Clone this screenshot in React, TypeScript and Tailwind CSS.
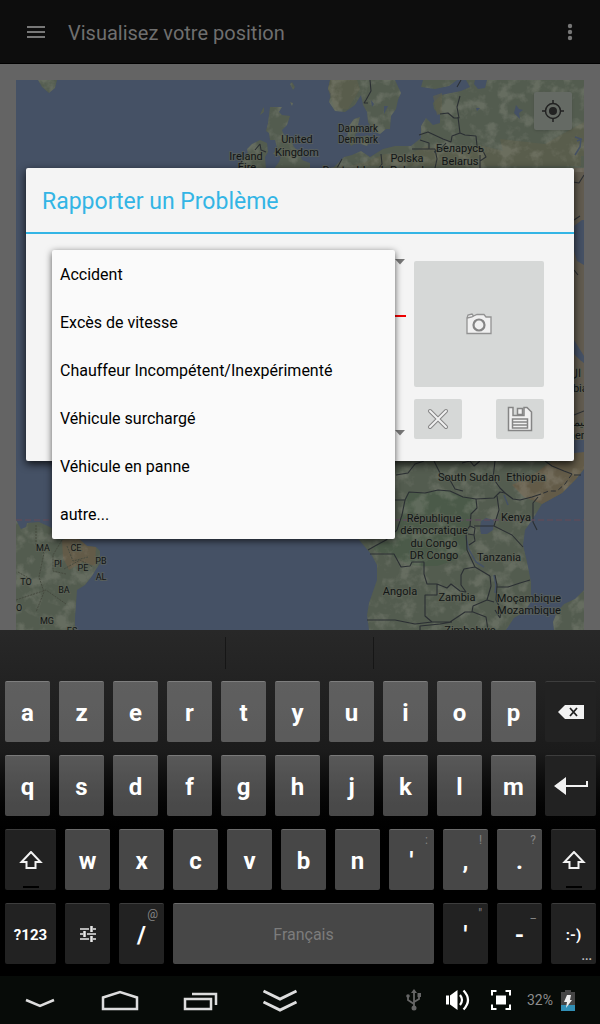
import type { ReactNode } from "react";

const problems = [
  "Accident",
  "Excès de vitesse",
  "Chauffeur Incompétent/Inexpérimenté",
  "Véhicule surchargé",
  "Véhicule en panne",
  "autre...",
];

type Label = { x: number; y: number; text: string; size?: number };

const labels: Label[] = [
  { x: 246, y: 160, text: "Ireland" },
  { x: 247, y: 171, text: "Éire" },
  { x: 297, y: 143, text: "United" },
  { x: 297, y: 156, text: "Kingdom" },
  { x: 358, y: 132, text: "Danmark", size: 10 },
  { x: 358, y: 143, text: "Denmark", size: 10 },
  { x: 407, y: 162, text: "Polska" },
  { x: 407, y: 174, text: "Poland" },
  { x: 353, y: 174, text: "Deutschland" },
  { x: 460, y: 152, text: "Беларусь" },
  { x: 460, y: 165, text: "Belarus" },
  { x: 469, y: 481, text: "South Sudan" },
  { x: 526, y: 481, text: "Ethiopia" },
  { x: 516, y: 521, text: "Kenya" },
  { x: 434, y: 522, text: "République" },
  { x: 434, y: 534, text: "démocratique" },
  { x: 434, y: 547, text: "du Congo" },
  { x: 434, y: 559, text: "DR Congo" },
  { x: 499, y: 561, text: "Tanzania" },
  { x: 400, y: 595, text: "Angola" },
  { x: 457, y: 601, text: "Zambia" },
  { x: 529, y: 602, text: "Moçambique" },
  { x: 529, y: 614, text: "Mozambique" },
  { x: 470, y: 634, text: "Zimbabwe" },
  { x: 43, y: 551, text: "MA", size: 9 },
  { x: 76, y: 551, text: "CE", size: 9 },
  { x: 58, y: 567, text: "PI", size: 9 },
  { x: 83, y: 571, text: "PE", size: 9 },
  { x: 101, y: 564, text: "PB", size: 9 },
  { x: 101, y: 580, text: "AL", size: 9 },
  { x: 26, y: 585, text: "TO", size: 9 },
  { x: 64, y: 593, text: "BA", size: 9 },
  { x: 16, y: 611, text: "GO", size: 9 },
  { x: 47, y: 624, text: "MG", size: 9 },
  { x: 72, y: 634, text: "ES", size: 9 },
  { x: 575, y: 377, text: "ال" },
  { x: 572, y: 392, text: "Arabia" },
  { x: 577, y: 426, text: "اليمن" },
  { x: 570, y: 439, text: "Yemen" },
];

function WorldMap() {
  return (
    <svg viewBox="16 80 568 550" preserveAspectRatio="xMidYMid slice" className="block h-[550px] w-full bg-[#455165]" role="img" aria-label="Carte">
      <defs>
        <filter id="grain" x="0" y="0" width="100%" height="100%">
          <feTurbulence type="fractalNoise" baseFrequency="0.07" numOctaves="4" seed="8" />
          <feColorMatrix values="0 0 0 0 0.41  0 0 0 0 0.40  0 0 0 0 0.35  4 0 0 0 -1.9" />
          <feComposite in2="SourceGraphic" operator="in" />
        </filter>
        <g id="north">
          <path d="M38 80h19l-2 8-6 5-7-6z" />
          <path d="M330 80l-2 9 3 5-2 8 6 9 10 1 10-7 6-10 2 10 4 7 1 10 5 9 7 3 6-5 4 0 1-13 5-7 2-9 3-7-6-13z" />
          <path d="M349 126l5-7 6-2-2 8 2 4-5 6 1 8-5 3-4-8zM361 137l7-2 3 5-4 6-6-2zM423 80l-2 7 14 2 14-3 8-6z" />
          <path d="M270 107l12 0-3 5 3 3 8 1-3 9-5 5 2 5 6 3 4 9 6 6 2 7 8 3v6h-36l5-7 2-6-8-2 4-6-2-8-5 0-1-7-3-2 2-8zM252 144l8-4 7 3 1 9-3 5 1 12h-26l2-8 6-6-1-6zM262 110l2-3 0 5-4 3zM290 102l3 1-1 3zM290 84l2-2 3 5-2 3z" />
          <path d="M584 80H466l4 7-9 4-20 4-8 8 1 6 6 6 0 8-7 2-7-7-5 8 0 12-10 8-16 0-12 3-13 8-9-6-9 4-8 2-9 9-5 6h264z" />
        </g>
        <g id="africa">
          <path d="M340 440H574L575 454 584 452V469L576 479 562 493 542 504 532 520 525 530 523 545 527 562 531 582 531 602 524 612 514 618 506 630H369L367 615 369 603 377 580 377 565 371 554 360 541 340 516z" />
          <path d="M584 590l-9 9-11 5-7 8-4 10 1 8h30z" />
          <path d="M16 520l5 9 5-2 1-4 12-1 11 5 12 8 0 5 9-3 7 1 9 8 9 1 4 4 0 12-8 13-7 9-8 5-2 28v12H16z" />
        </g>
      </defs>
      <g fill="#535c4f">
        <use href="#north" />
        <use href="#africa" />
        <path d="M574 168h10v292h-10z" fill="#625c50" />
      </g>
      <path d="M330 80l-2 9 7 21 13-1 12-20-3-9zM433 96l9-3 0 20-5 2zM365 162l20-8 22 1 19-9 28 7 25-8 32 8 70-7v20H350zM500 139l45 5 39-22v34h-80z" fill="#5c5e4b" opacity=".7" />
      <path d="M584 452v17l-8 10-14 14-20 11-18-7-12-12 24-12 22-17zM62 540l9-3 7 1 9 8 9 1-1 19-13-4-13 8-6-12z" fill="#635b48" />
      <path d="M405 500l4-8 16 1 13-3 12 1 13 6 13 2 1 9-6 6-1 12-4 5 1 19-12 10-18 6-20 0-10-2-18-10-13-2-3-5 10-6 11-10 7-14z" fill="#4a5a47" opacity=".8" />
      <g filter="url(#grain)" opacity=".22">
        <use href="#north" />
        <use href="#africa" />
      </g>
      <g fill="#455165">
        <path d="M475 80h12l-2 8-7 1-4-5zM516 105l3 4 4 1-4 3 1 6-6-6zM476 108l4 0-3 3zM371 100l3 4-2 3zM384 106l4 0-4 8zM574 226l8-6h2v45l-7-4-3-10zM574 340l10 16v7l-4-3-6-6zM574 440h10v12l-10 1zM481 521l5-3 8 2-1 10-6 4-6 0-1-6z" />
      </g>
      <g fill="none" stroke="#455165" strokeWidth="1.5">
        <path d="M504 495l2 5 2 5M466 536l2 12 8 14 8 5M494 575l2 10-1 8M575 155l5-8 1-8-6-2M577 141l5-2" />
      </g>
      <g fill="none" stroke="#2b2f33" strokeWidth="1.100" strokeLinejoin="bevel">
        <path d="M370 80l1 11-5 9-2 3 4 0M461 80l-4 7M460 96l-3 11 2 11-5 0-6-5-8 1M458 117l2 16-8 3-1 6-8-3-15-7-9 3M460 133l5 2 11 1 1 10 6 5 3 6-6 4M412 149h23l2 10-2 9M420 140l9 3 0 6M434 152l7-3 5-6M255 150l5-6 1 6 5 2M351 140l4 1M337 168l5-9M381 154l1 10-3 4M480 155l0 13" />
        <path d="M396 475L408 473 415 464 424 461M434 461L440 473 450 480 455 489 463 491M462 463L470 461 474 466 480 461M495 461L493 478 500 488 505 493" />
        <path d="M395 500H405L409 492 425 493 438 490 450 491 463 497 476 499 494 498 500 492 505 493 513 499 520 500 532 497 541 494" />
        <path d="M405 500L402 515 397 530 386 540 375 546 368 550M476 499L477 508 471 514 470 526 466 531 467 550 475 567 490 576M497 496L499 510 494 526H474M494 526L512 535 523 547M538 497L533 503V522L537 530M470 526L475 528 474 535 468 534M474 535L475 541 469 545" />
        <path d="M370 554H394L401 567 410 566 412 562H424V574L427 584H437V595H425V616L432 622M437 584L447 588 451 584 460 591 466 592 461 585 461 575 464 569 475 567M367 620L395 620 415 624 432 622 450 622 465 612 473 612 486 617 488 630M490 576L491 586 487 600 473 606 472 612M495 575L497 585 496 600 501 610 500 618 495 610M497 587L508 587 520 583 530 580M420 630V626L440 624 452 622M487 600L494 602" />
        <path d="M573 182l6 1 5-8M574 220l6-4M574 270l4 5M574 415l10-4M574 475l7 0M545 461L552 466 564 471 572 474" />
      </g>
      <path d="M572 474L565 484 557 491H549L541 494" fill="none" stroke="#2b2f33" strokeDasharray="5 3" />
      <path d="M36 525v20l8 8-5 24 5 15-8 20M62 540l-9 15 0 16 13 3M67 546l6 15 15-4M64 569l16-9 13 7M18 572l14 8M16 600l30-10 20 14" fill="none" stroke="#464a3f" strokeDasharray="2 1" />
      <path d="M16 520H584" stroke="#5c4c5b" strokeWidth="1.500" strokeDasharray="6 3" />
      <g fontFamily="Roboto, sans-serif" textAnchor="middle" fill="#121516" stroke="#606558" strokeWidth="2" strokeOpacity=".6" paintOrder="stroke">
        {labels.map((l) => (
          <text key={l.text} x={l.x} y={l.y} fontSize={l.size ?? 11}>{l.text}</text>
        ))}
      </g>
    </svg>
  );
}

type KeyProps = { children: ReactNode; dark?: boolean; size?: string; hint?: string; grow?: string; label?: string; mark?: ReactNode };

function Key({ children, dark, size = "text-2xl", hint, grow = "flex-[45]", label, mark }: KeyProps) {
  return (
    <button
      type="button"
      aria-label={label}
      className={`relative flex h-[61px] min-w-0 items-center justify-center rounded-xs border-t pt-0.5 font-bold text-white ${grow} ${size} ${
        dark ? "border-[#3d3d3d] bg-[#222]" : "border-white/20 bg-white/28"
      }`}
    >
      {children}
      {hint && <span className="absolute top-0.5 right-1.5 text-xs font-normal text-[#858585]">{hint}</span>}
      {mark}
    </button>
  );
}

const wide = "flex-[51]";

function Shift({ grow }: { grow?: string }) {
  return (
    <Key dark label="Majuscule" grow={grow} mark={<span className="absolute bottom-0.5 h-0.5 w-4 bg-black" />}>
      <svg width="24" height="20" viewBox="0 0 24 20" fill="none" stroke="#f2f2f2" strokeWidth="2">
        <path d="M12 1L2.500 11H7.500v6h9v-6h5z" />
      </svg>
    </Key>
  );
}

function Keyboard() {
  return (
    <section aria-label="Clavier" className="bg-linear-to-b from-[#282828] via-[#1b1b1b] via-35% to-black to-65% pb-3">
      <div className="grid h-[51px] grid-cols-[226fr_148fr_226fr] pt-[7px] pb-3">
        <div className="border-r border-black/40" />
        <div className="border-r border-black/40" />
      </div>
      <div className="flex flex-col gap-[13px] pr-1 pl-[5px]">
        <div className="flex gap-[9px]">
          {"azertyuiop".split("").map((c) => <Key key={c}>{c}</Key>)}
          <Key dark grow={wide} label="Effacer">
            <svg width="26" height="16" viewBox="0 0 26 16">
              <path d="M0 7L7 0h19v14H7z" fill="#f2f2f2" />
              <path d="M12 3l7 8M19 3l-7 8" stroke="#222" strokeWidth="1.800" />
            </svg>
          </Key>
        </div>
        <div className="flex gap-[9px]">
          {"qsdfghjklm".split("").map((c) => <Key key={c}>{c}</Key>)}
          <Key dark grow={wide} label="Entrée">
            <svg width="34" height="20" viewBox="0 0 34 20" fill="#f2f2f2">
              <path d="M0 9L12 0v8h20V4h2v6H12v8z" />
            </svg>
          </Key>
        </div>
        <div className="flex gap-[9px]">
          <Shift grow={wide} />
          {"wxcvbn".split("").map((c) => <Key key={c}>{c}</Key>)}
          <Key hint=":">'</Key>
          <Key hint="!">,</Key>
          <Key hint="?">.</Key>
          <Shift />
        </div>
        <div className="flex gap-[9px]">
          <Key dark grow={wide} size="text-[15px]">?123</Key>
          <Key dark label="Réglages">
            <svg width="16" height="18" viewBox="0 0 16 18" stroke="#e8e8e8" strokeWidth="1.500">
              <path d="M0 3h9M13 3h3M0 8h3M7 8h9M0 13h9M13 13h3" />
              <path d="M11.500 0v6M4.500 5v6M11.500 10v6" strokeWidth="2.500" />
            </svg>
          </Key>
          <Key dark hint="@">/</Key>
          <Key grow="flex-[261]" size="text-base"><span className="font-normal text-[#7c7c7c]">Français</span></Key>
          <Key dark hint={'"'}>'</Key>
          <Key dark hint="_">-</Key>
          <Key dark size="text-[15px]" mark={<span className="absolute right-1 bottom-0.5 text-xs leading-none text-[#bbb]">...</span>}>:-)</Key>
        </div>
      </div>
    </section>
  );
}

function NavBar() {
  return (
    <nav aria-label="Système" className="flex h-12 items-center justify-between bg-[#070b08] pr-[25px]">
      <div className="flex">
        <button type="button" aria-label="Masquer" className="flex h-12 w-20 items-center justify-center">
          <svg width="30" height="24" viewBox="0 0 30 24" fill="none" stroke="#ddd" strokeWidth="2.500"><path d="M1 12l14 6 14-6" /></svg>
        </button>
        <button type="button" aria-label="Accueil" className="flex h-12 w-20 items-center justify-center">
          <svg width="38" height="24" viewBox="0 0 38 24" fill="none" stroke="#ddd" strokeWidth="2.500"><path d="M2 21V9.500L19 4l17 5.500V21z" /></svg>
        </button>
        <button type="button" aria-label="Applications récentes" className="flex h-12 w-20 items-center justify-center">
          <svg width="36" height="24" viewBox="0 0 36 24" fill="none" stroke="#ddd" strokeWidth="2.500"><path d="M3 11h26V21H3zM10 6h24V17" /></svg>
        </button>
        <button type="button" aria-label="Réduire" className="flex h-12 w-20 items-center justify-center">
          <svg width="36" height="24" viewBox="0 0 36 24" fill="none" stroke="#ddd" strokeWidth="3"><path d="M1.500 3l16.500 8 16.500-8M1.500 14l16.500 8 16.500-8" /></svg>
        </button>
      </div>
      <div className="flex items-center">
        <svg className="mr-6" width="16" height="24" viewBox="0 0 16 24" fill="none" stroke="#666" strokeWidth="1.800">
          <path d="M8 3v17M8 16L2 12V8M8 14l5-3V7" />
          <path d="M8 1l3 4H5z" fill="#666" stroke="none" />
          <circle cx="8" cy="20" r="2.500" fill="#666" stroke="none" />
          <circle cx="2" cy="8" r="1.800" fill="#666" stroke="none" />
          <path d="M11.500 5h3.500v4h-3.500z" fill="#666" stroke="none" />
        </svg>
        <button type="button" aria-label="Volume" className="mr-5">
          <svg width="25" height="22" viewBox="0 0 25 22" fill="none" stroke="#fff" strokeWidth="2.200">
            <path d="M0 6.500h3v9H0zM4 6.500L11.500 1v20L4 15.500z" fill="#fff" stroke="none" />
            <path d="M14 6q4 5 0 10M17.500 1.500q9 9.500 0 19" />
          </svg>
        </button>
        <button type="button" aria-label="Plein écran" className="mr-4">
          <svg width="20" height="20" viewBox="0 0 20 20" fill="none" stroke="#fff" strokeWidth="2">
            <path d="M1 5.500V1h4.500M14.500 1H19v4.500M19 14.500V19h-4.500M5.500 19H1v-4.500" />
            <path d="M5 5.500h10v9H5z" fill="#fff" stroke="none" />
          </svg>
        </button>
        <span className="mr-2 text-sm text-[#8c8c8c]">32%</span>
        <svg width="14" height="21" viewBox="0 0 14 21">
          <path d="M0 2h4V0h6v2h4v13H0z" fill="#454545" />
          <path d="M0 15h14v6H0z" fill="#318fb5" />
          <path d="M6 5h4l-1 5 2 0-6 8 1-6H3z" fill="#eee" />
        </svg>
      </div>
    </nav>
  );
}

function Caret({ label }: { label: string }) {
  return (
    <button type="button" aria-label={label} aria-haspopup="listbox" className="flex w-full justify-end pr-px">
      <svg width="10" height="6" viewBox="0 0 10 6" fill="#777"><path d="M0 0h10L5 5.500z" /></svg>
    </button>
  );
}

function ReportDialog() {
  return (
    <div role="dialog" aria-labelledby="report-title" className="absolute inset-x-[26px] top-[104px] rounded-xs bg-[#f4f4f4] shadow-[0_3px_9px_rgba(0,0,0,0.8)]">
      <h2 id="report-title" className="flex h-[66px] items-center border-b-2 border-[#33b5e5] px-4 pt-1 text-[23px] text-[#33b5e5]">
        Rapporter un Problème
      </h2>
      <div className="flex gap-2 pt-[25px] pr-[30px] pb-[22px] pl-[26px]">
        <div className="flex min-w-0 flex-1 flex-col justify-between pb-[3px]">
          <div>
            <Caret label="Type de problème" />
            <input aria-label="Description" className="mt-5 block h-8 w-full border-b-2 border-[#f00000] outline-none" />
          </div>
          <Caret label="Véhicule" />
        </div>
        <div className="w-[130px] pt-0.5">
          <button type="button" aria-label="Photo" className="flex h-[126px] w-full items-center justify-center rounded-xs bg-[#d6d8d7]">
            <svg width="26" height="22" viewBox="0 0 26 22" fill="#f0f0f0" stroke="#929292" strokeWidth="1.300">
              <path d="M1 20.500V5l1-3 4-1 1.500 2 3.500-1.500h7l2 2.500h5v16.500z" />
              <path d="M1 5l5-1 1.500-1" fill="none" />
              <circle cx="13" cy="12" r="5.500" strokeWidth="2.200" stroke="#858585" />
            </svg>
          </button>
          <div className="mt-3 flex justify-between">
            <button type="button" aria-label="Annuler" className="flex h-10 w-12 items-center justify-center rounded-xs bg-[#d6d8d7]">
              <svg width="22" height="22" viewBox="0 0 22 22" strokeLinecap="round">
                <path d="M3 3l16 16M19 3L3 19" stroke="#858585" strokeWidth="4" />
                <path d="M3 3l16 16M19 3L3 19" stroke="#f0f0f0" strokeWidth="2" />
              </svg>
            </button>
            <button type="button" aria-label="Enregistrer" className="flex h-10 w-12 items-center justify-center rounded-xs bg-[#d6d8d7]">
              <svg width="26" height="26" viewBox="0 0 26 26" fill="#f0f0f0" stroke="#858585" strokeWidth="1.500">
                <path d="M1.500 1.500H6v8h11v-8h3l4.500 4.500v18.500h-23z" />
                <path d="M10.500 2.500h5v6h-5z" />
                <path d="M5.500 13h15v3h-15zM5.500 16h15v3h-15zM5.500 19h15v3h-15z" />
              </svg>
            </button>
          </div>
        </div>
      </div>
      <ul role="listbox" aria-label="Type de problème" className="absolute top-[82px] right-[179px] left-[26px] rounded-xs bg-[#fafafa] pb-px shadow-[0_2px_7px_rgba(0,0,0,0.65)]">
        {problems.map((p) => (
          <li key={p} role="option" aria-selected={false} className="flex h-12 items-center px-2 pt-0.5 text-base whitespace-nowrap text-black">{p}</li>
        ))}
      </ul>
    </div>
  );
}

export default function App() {
  return (
    <div className="flex min-h-screen flex-col bg-[#646464] font-['Roboto',sans-serif]">
      <header className="flex h-16 items-center border-b border-black bg-[#0d0d0d] px-6 text-[#6f6f6f]">
        <button type="button" aria-label="Menu" className="mr-5">
          <svg width="24" height="24" viewBox="0 0 24 24" fill="#777"><path d="M3 6h18v2H3zM3 11h18v2H3zM3 16h18v2H3z" /></svg>
        </button>
        <h1 className="flex-1 pt-0.5 text-xl">Visualisez votre position</h1>
        <button type="button" aria-label="Options">
          <svg width="12" height="24" viewBox="0 0 12 24" fill="#777"><circle cx="6" cy="6" r="2.200" /><circle cx="6" cy="12" r="2.200" /><circle cx="6" cy="18" r="2.200" /></svg>
        </button>
      </header>
      <main className="relative flex-1 px-4 pt-4">
        <WorldMap />
        <button type="button" aria-label="Ma position" className="absolute top-7 right-7 flex size-[38px] items-center justify-center rounded-xs bg-[#656a64] shadow-sm">
          <svg width="22" height="22" viewBox="0 0 22 22" fill="none" stroke="#222" strokeWidth="1.500">
            <circle cx="11" cy="11" r="7.500" />
            <circle cx="11" cy="11" r="4" fill="#222" stroke="none" />
            <path d="M11 0v3.500M11 18.500V22M0 11h3.500M18.500 11H22" />
          </svg>
        </button>
        <ReportDialog />
      </main>
      <Keyboard />
      <NavBar />
    </div>
  );
}
